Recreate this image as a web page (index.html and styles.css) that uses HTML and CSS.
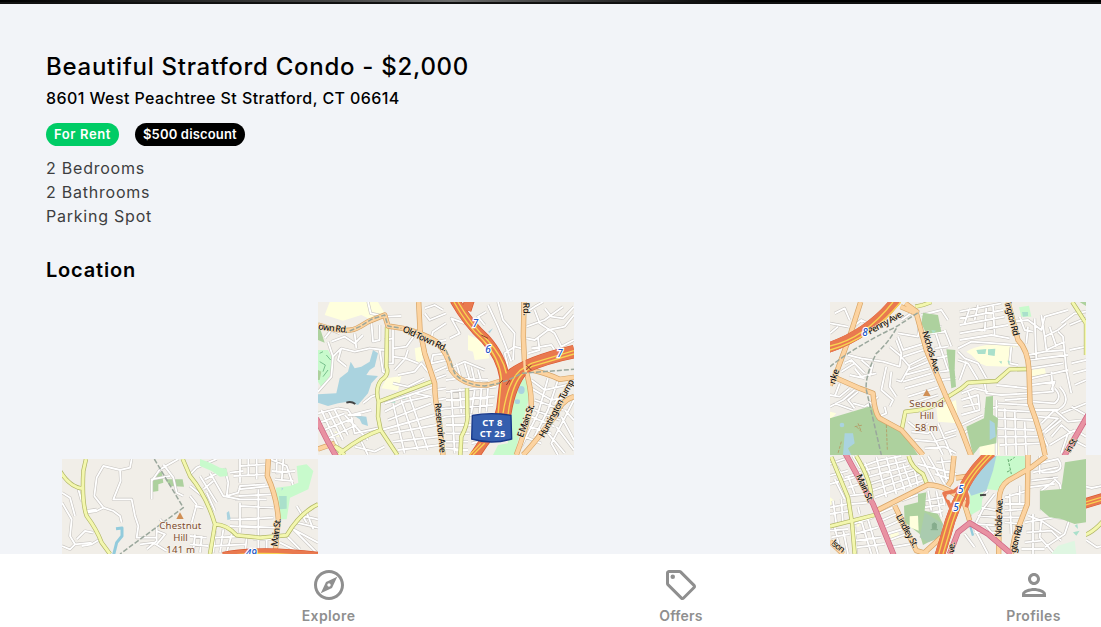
FILE: index.html
```
<!DOCTYPE html>
<html lang="en">
<head>
<meta charset="utf-8">
<title>Beautiful Stratford Condo</title>
<link rel="stylesheet" href="styles.css">
</head>
<body>
<div class="app">
<div class="slide"></div>
<main class="details">
  <h1 class="name">Beautiful Stratford Condo - $2,000</h1>
  <p class="address">8601 West Peachtree St Stratford, CT 06614</p>
  <div class="tags"><span class="tag rent">For Rent</span><span class="tag discount">$500 discount</span></div>
  <ul class="features"><li>2 Bedrooms</li><li>2 Bathrooms</li><li>Parking Spot</li></ul>
  <h2 class="location">Location</h2>
</main>
<section class="map">

<svg class="tile tile-a" viewBox="0 6 768 459">
<defs>
<g id="a-st">
<path d="M150 6L158 40L205 50L250 48M225 85L225 190L205 190M225 115L200 120M225 145L265 140L290 105L300 95M225 170L262 175L270 150M320 25L350 15L375 30M320 40L335 60L384 40M384 70L345 95L335 130L384 120M230 210L262 175L300 190M240 225L290 215L310 190L330 215M320 235L270 260L225 250M384 160L345 165L340 190L384 180M384 200L350 215M30 125L45 170L70 145L110 155L155 145L200 150M45 170L40 230L0 275M70 145L60 180L85 200M20 115L40 90L65 100M40 125L80 110L110 130L135 105M110 100L115 145M160 65L165 125L185 120L185 75M185 150L195 215L205 220M135 310L160 290L175 285M0 340L60 325L90 330L100 345L160 330M10 330L60 440M30 330L75 420M50 330L90 405M0 370L80 340M5 395L105 355M20 420L115 375M90 345L130 345M100 350L110 400L180 385M80 345L150 420M110 440L170 455L200 440M130 425L150 465"/>
<path d="M200 310L350 260M200 335L260 305L330 290M210 360L340 310M190 390L350 345M215 400L355 375M225 425L360 410M240 450L365 435M225 310L260 460M250 300L300 450M275 290L330 450M265 290L290 280L340 290M355 235L384 225M350 270L384 265M355 300L384 295M355 330L384 325M365 355L384 350"/>
<path d="M510 15L540 80L560 130L580 185M540 6L555 60L590 100L585 180M500 75L480 50L505 35M440 70L400 55L425 100L395 115M384 210L440 185L500 210M400 200L415 235M415 190L430 240M440 190L455 240M460 200L470 245M480 210L490 245M384 240L420 235L510 240M570 200L560 160L590 140L610 145M625 80L680 60L735 20M625 115L650 120L690 90L740 80L768 45M650 30L665 70L710 100L730 140L768 120M680 25L700 50L735 55L768 20M640 145L700 135L720 165M620 40L650 20L675 6M630 160L665 150L660 115"/>
<path d="M384 275L535 260M384 300L530 290M384 325L525 315M384 350L465 345M384 375L460 375M384 400L455 400M384 425L450 425M384 445L450 450M400 270L410 460M425 265L430 340M470 270L460 340M490 265L485 340M510 265L505 335M460 430L510 420M640 240L680 270L768 250M640 265L700 300L750 290M650 300L735 330M650 330L725 360M640 350L710 380M635 380L700 400M620 410L670 430M690 235L660 340L610 440M720 240L690 330L650 410M745 270L710 310M768 300L700 430L720 465M730 350L768 420M715 380L768 450M690 400L740 460M740 330L768 360"/>
</g>
<g id="a-yel"><path d="M207 80L205 200Q215 225 190 240Q170 265 182 305L180 350L188 390L238 465M182 305L340 245M188 390Q130 410 75 453L45 435L80 465M75 453L60 465M447 265L448 340Q452 370 430 410L427 465"/></g>
<g id="a-or"><path d="M0 75Q90 105 125 80L150 65L200 45L210 78L255 85Q315 98 355 125Q390 160 400 210Q435 260 510 255Q570 240 620 205Q690 220 725 238L768 232M302 6L306 90L320 160L350 250Q350 300 363 355L375 465M0 447L50 430M618 6L616 110L620 200Q640 260 640 315Q620 400 595 465M768 290Q730 300 710 350Q640 440 615 465"/></g>
</defs>
<rect class="land" x="0" y="0" width="768" height="470"/>
<path class="school" d="M35 6L180 6L205 48L150 55L130 45L75 62L20 45ZM205 235L250 228L240 272L190 265ZM290 145L310 140L315 180L295 190ZM450 105L500 125L515 175L470 180L465 155L450 150ZM50 395L75 392L70 410L55 410Z"/>
<path class="park" d="M0 150L30 150L45 180L35 230L10 262L0 245ZM610 235L630 240L632 300L610 380L590 465L525 465L540 435L570 430L565 350L580 300Z"/>
<path class="wood" d="M0 65L20 128L0 120ZM0 210L10 215L5 240L0 240Z"/>
<path class="scrub" d="M5 160L15 155M25 165L38 180M5 185L22 195L15 215M15 230L30 210"/>
<path class="pitch" d="M215 300L230 295L232 308L220 308ZM245 290L265 285L262 297L248 297Z"/>
<path class="water" d="M98 185L110 205L130 200L155 185L165 150L180 160L170 200L155 210L145 225L180 228L160 250L150 280L120 315L90 305L60 310L30 318L0 308L0 283L55 280L65 235L90 215ZM105 345L145 350L150 378L132 372L125 358ZM510 95L525 85L515 100ZM600 270a10 12 0 1 0 20 0a10 12 0 1 0 -20 0M590 305a8 7 0 1 0 16 0a8 7 0 1 0 -16 0"/>
<use href="#a-st" class="st-case"/><use href="#a-st" class="st"/>
<path class="dam" d="M85 308Q100 303 112 312"/>
<use href="#a-yel" class="yel-case"/><use href="#a-yel" class="yel"/>
<use href="#a-or" class="or-case"/><use href="#a-or" class="or"/>
<path class="pink-case" d="M-5 355Q20 410 55 470"/><path class="pink" d="M-5 355Q20 410 55 470"/>
<path class="mw-case" d="M410 0Q450 70 500 115Q550 170 560 235Q560 300 545 345M455 0L445 30M545 370L560 240Q600 190 768 150M768 160Q690 175 620 205Q580 250 565 340L495 430L465 475"/>
<path class="mw" d="M410 0Q450 70 500 115Q550 170 560 235Q560 300 545 345M455 0L445 30M545 370L560 240Q600 190 768 150M768 160Q690 175 620 205Q580 250 565 340L495 430L465 475"/>
<path class="lane" d="M408 6Q445 75 495 120Q545 175 550 235L540 345M420 6Q460 75 508 120Q555 170 565 220M768 152L640 190L605 212Q570 245 555 340M768 162L640 200L610 225Q580 260 570 345M500 430L465 465M488 430L455 465"/>
<path class="or thin" d="M618 150L620 205Q640 255 640 290"/>
<path class="rail" d="M95 93L125 80L160 58L200 45L210 78L250 85M384 150L410 220Q440 255 500 258Q560 250 610 220L768 208"/>
<path class="bridge" d="M545 250L555 240M565 255L575 240M625 210L640 195M625 195L640 210M490 105L510 115"/>
<g class="road-name">
<text transform="translate(0 88) rotate(7)" textLength="88">own Rd.</text>
<text transform="translate(252 94) rotate(25)" textLength="143">Old Town Rd.</text>
<text transform="translate(350 310) rotate(84)" textLength="150">Reservoir Ave</text>
<text transform="translate(615 8) rotate(88)" textLength="40">Rd.</text>
<text transform="translate(614 414) rotate(-70)" textLength="104">E Main St.</text>
<text transform="translate(678 415) rotate(-62)" textLength="194">Huntington Turnp</text>
</g>
<g class="exit"><text x="464" y="80">7</text><text x="502" y="158">6</text><text x="718" y="172">7</text></g>
<path class="shield" d="M463 346Q520 336 579 346L581 417Q520 435 461 417Z"/>
<g class="shield-text"><text x="493" y="377" textLength="60">CT 8</text><text x="485" y="412" textLength="77">CT 25</text></g>
</svg>

<svg class="tile tile-b" viewBox="6 6 768 459">
<defs>
<g id="b-st">
<path d="M20 40L50 25L65 60M6 70L60 80M65 90L100 60L130 75M6 100L30 80M60 165L100 175L165 185M50 190L70 180L110 220M40 215L80 190M100 180L130 205M80 205L100 230L145 220M65 225L110 235M185 140L215 165L245 200L220 245L205 240M205 120L220 160L215 200L165 185M175 200L160 270L195 300L185 320M190 215L185 260L205 290M135 190L125 230M210 100L270 110L275 75M210 110L225 150L290 130M225 170L300 145M245 195L305 165M240 210L300 185M230 225L305 205M225 245L310 220M230 265L320 240M240 290L330 262M250 310L330 285M285 70L340 80M300 100L355 95M320 145L360 140M325 175L370 165M335 215L380 210M340 240L384 235M310 60L360 210M350 90L370 140M280 45L340 30L360 60M220 60L250 40M140 300L110 320L75 310M120 320L150 290M90 275L60 300L80 325M80 270L45 300L6 320M65 265L35 290L6 285M35 250L20 290M75 330L20 310M150 350L175 340L170 320M240 365L270 390L300 370M250 395L300 400L320 380M260 420L320 425L384 405M290 445L350 440L384 460M300 380L345 465M330 370L370 465M350 400L384 390"/>
<path d="M395 35L520 10M395 55L525 30M395 75L530 50M395 100L540 75M395 120L490 105L545 115M410 70L425 25M440 60L450 15M470 95L475 20M500 105L495 15M390 145L430 125L570 135M390 155L410 175L450 190L475 235M390 180L420 190L450 240M415 185L395 240M550 65L600 60L640 90L650 50L720 30M600 80L595 130M620 55L625 180M640 45L650 110L690 90L715 70M575 50L590 90L615 95M650 110L655 150L710 125M665 80L685 140M690 95L705 110L715 210L730 280M600 165L650 155L710 150M600 180L720 165M605 205L705 190M610 235L720 210M610 255L680 245L670 270M550 140L545 190L570 195M610 280L675 275L670 215M725 150L774 140M730 190L774 180M735 220L774 210M740 255L774 240M725 75L774 55M700 70L740 40L774 35"/>
<path d="M470 250L475 280L520 285M505 255L600 265M520 285L600 280M530 300L600 295M470 330L510 320M400 280L440 265L480 275M400 300L450 285L455 330L400 345M405 320L455 310M420 275L440 330M510 310L600 315M510 330L605 335M510 355L615 360M500 385L620 390M510 410L630 410M515 435L635 430M505 300L505 465M530 325L535 465M560 330L565 465M590 365L595 465M615 305L680 310Q705 290 680 265M620 330L690 330Q735 305 695 260M630 350L690 355L640 400L660 440M640 370L680 330L720 365L774 360M650 400L700 360M670 410L700 375L730 400M665 435L740 390M700 340L774 310M730 320L774 345M720 400L700 460M740 390L774 410M735 420L774 440M400 375L465 345M405 400L440 380L440 440"/>
</g>
<g id="b-yel"><path d="M262 20L285 15L310 6M220 395L232 335Q310 330 345 300L400 265L420 248L505 243L545 208L600 207M733 6L774 70L774 165"/></g>
<g id="b-or"><path d="M98 6L65 110L20 232L95 265L135 280Q140 340 155 355L220 390L285 465M20 232L6 255M218 20L265 40L295 150L350 280L400 390L430 470M232 10L270 38M540 6L570 120Q600 150 603 210L606 310Q640 400 652 470"/></g>
</defs>
<rect class="land" x="0" y="0" width="780" height="470"/>
<path class="school" d="M6 335L25 340L6 360ZM325 325L384 300L390 370L330 365ZM415 155Q450 130 570 128L570 140L545 145L545 200L475 198L455 190L430 165ZM610 210L650 205L655 225L612 230ZM455 430L510 415L515 465L455 465Z"/>
<path class="park" d="M573 22L603 17L610 50L580 50Z"/>
<use href="#b-st" class="st-case"/><use href="#b-st" class="st"/>
<path class="wood" d="M285 38L330 45L340 95L295 102L280 70ZM355 148L382 150L380 210L384 260L370 265L365 220ZM6 355L130 318L150 360L225 395L270 465L6 465ZM474 290L495 288L495 345L510 355L505 430L455 440L435 465L415 380L468 355ZM755 6L774 6L774 18Z"/>
<path class="pitch" d="M445 150L475 147L472 162L450 162ZM480 148L502 146L500 168L480 165ZM582 36L600 36L600 48L585 50ZM513 184L522 184L520 192ZM538 182L545 182L545 196ZM310 90L325 92L315 100Z"/>
<path class="water" d="M485 360L500 370L503 410L485 420ZM50 400L75 400L80 430L60 445L70 465L45 465ZM35 375a7 7 0 1 0 14 0a7 7 0 1 0 -14 0"/>
<path class="trail" d="M90 370L100 395L85 380M80 380L105 375M175 375L178 450M40 425L30 460"/>
<use href="#b-yel" class="yel-case"/><use href="#b-yel" class="yel"/>
<use href="#b-or" class="or-case"/><use href="#b-or" class="or"/>
<path class="pink-case" d="M780 345L705 475"/><path class="pink" d="M780 345L705 475"/>
<path class="mw-case" d="M-5 145Q120 105 205 0"/><path class="mw wide" d="M-5 145Q120 105 205 0"/>
<path class="lane" d="M6 138Q110 115 195 6M6 150Q130 115 218 6"/>
<path class="rail" d="M6 200Q80 140 205 80L275 35M205 85Q180 130 145 160Q110 230 115 270L160 465"/>
<g class="road-name">
<text transform="translate(125 104) rotate(-29)" textLength="118">Penny Ave.</text>
<text transform="translate(282 96) rotate(73)" textLength="132">Nichols Ave.</text>
<text transform="translate(20 254) rotate(-72)" textLength="46">nke</text>
<text transform="translate(530 10) rotate(75)" textLength="103">ington Rd</text>
<text transform="translate(726 460) rotate(-60)" textLength="48">in St.</text>
</g>
<g class="exit"><text x="103" y="107">8</text></g>
<path class="peak" d="M285 288L296 268L308 288Z"/>
<g class="hill"><text x="244" y="321" textLength="103">Second</text><text x="275" y="356" textLength="43">Hill</text><text x="261" y="392" textLength="69">58 m</text></g>
</svg>

<svg class="tile tile-c" viewBox="6 9 768 285">
<defs>
<g id="c-st">
<path d="M215 9L210 35L180 42L130 30L110 65L103 120L130 155L110 165L80 170M180 42L182 75L160 130L215 130L225 180L235 210L230 245L290 245M130 155L160 165L180 180L185 200M80 165L110 160M6 110L30 125L45 180M6 140L35 190L30 240L45 265L95 260M50 250L75 225L100 230M55 100L65 135M65 270L95 265L120 250M6 270L30 280L45 265M275 130L275 70L330 60M275 75L300 40L355 9M310 25L340 65L350 110L370 120M290 225L315 235L290 265M290 215L290 255L260 280M300 190L320 210M240 265L280 260L320 285"/>
<path d="M390 55L410 35L470 9M420 60L470 140M435 70L495 40L505 80L500 120M430 100L460 75M440 110L465 165M450 50L490 120L540 130M510 50L550 45M540 9L540 80M565 9L565 60M590 9L590 70M540 30L615 25M520 60L615 55M535 100L630 90M535 120L635 115M500 120L535 110L540 90L615 85M525 130L620 130M540 150L640 155M540 140L540 230M595 100L595 280M630 9L680 30L700 90M650 9L650 50L705 45M670 9L665 75M645 70L700 75M635 45L690 50M540 190L640 185M540 210L645 215M510 190L590 190M510 210L590 215M465 225L460 290M490 220L480 290M515 235L500 290M465 245L560 240M460 270L555 265M560 245L555 290M390 90L440 130M390 120L410 145L395 200M405 150L430 155M390 240L440 245M390 265L445 270M405 235L400 285M425 240L420 290M580 250L640 250M620 245L620 290M680 240L720 280M700 220L774 260M710 200L774 215M740 170L760 220M710 150L740 200M730 180L774 190M690 210L770 290M660 260L720 290"/>
</g>
<g id="c-yel"><path d="M0 45Q30 95 70 98M78 9L70 45Q65 140 80 180Q110 220 125 260L150 294M368 9L390 60Q440 120 465 205L450 294M465 205Q500 205 530 238L600 245L680 238Q720 170 774 145"/></g>
<g id="c-or"><path d="M625 9L622 60Q650 120 655 190L645 294"/></g>
</defs>
<rect class="land" x="0" y="0" width="780" height="300"/>
<path class="wood" d="M280 65L305 45L310 80L295 85L295 105L275 108ZM315 70L368 70L372 92L330 90Z"/>
<use href="#c-st" class="st-case"/><use href="#c-st" class="st"/>
<path class="park" d="M420 9L450 20L480 35L500 38L503 60L480 62L455 45L420 30ZM710 30L740 25L760 45L745 100L690 125L680 190L655 190L648 95L690 90L715 80Z"/>
<path class="pitch" d="M657 120L680 120L680 158L660 160Z"/>
<path class="water" d="M500 170L507 165L512 190L502 192ZM665 95L670 97L665 104Z"/>
<path class="stream" d="M168 218L186 216L186 240L170 260L160 300"/>
<use href="#c-yel" class="yel-case"/><use href="#c-yel" class="yel"/>
<use href="#c-or" class="or-case"/><use href="#c-or" class="or"/>
<path class="rail" d="M283 9L370 155L180 294"/>
<path class="mw-case" d="M490 303Q600 281 774 303"/><path class="mw" d="M490 303Q600 281 774 303"/>
<path class="lane" d="M520 297Q600 287 710 297"/>
<g class="road-name"><text transform="translate(652 272) rotate(-83)" textLength="84">Main St.</text></g>
<g class="exit"><text x="557" y="302">49</text></g>
<path class="peak" d="M349 189L360 169L371 189Z"/>
<g class="hill"><text x="298" y="220" textLength="126">Chestnut</text><text x="340" y="254" textLength="43">Hill</text><text x="319" y="291" textLength="86">141 m</text></g>
</svg>

<svg class="tile tile-d" viewBox="6 3 768 297">
<defs>
<g id="d-st">
<path d="M6 30L50 15M6 65L60 50M20 75L50 135M6 90L80 70M50 70L100 55M25 35L45 70M60 65L80 120M60 100L95 90M65 125L110 120M70 150L130 145M90 160L95 180M75 6L95 40L150 20L220 6M105 50L235 20M115 70L245 35M125 90L265 45M130 110L280 60M140 130L285 80M110 25L125 60M145 9L175 130M175 9L205 120M200 6L230 110M225 30L250 100M260 50L270 95M280 9L320 85M270 30L384 60M300 6L350 90M325 25L384 20M320 60L370 75M340 9L355 80M6 160L60 150M6 180L65 170M15 140L25 210M40 135L45 210M6 230L60 225M10 250L65 240M20 220L35 280M45 225L60 300M80 220L85 300M75 210L135 190M80 240L150 220M80 260L160 250M85 280L170 270M100 200L130 300M120 195L150 300M150 180L195 160M160 200L205 180M170 220L215 200M175 240L225 225M180 260L235 240M190 280L250 270M220 140L275 120M280 120L290 160L350 150M300 110L310 170M325 110L340 190M290 140L345 130M290 180L345 170M345 120L350 155"/>
<path d="M625 30L690 15Q720 60 640 55M615 55L690 40M610 80L690 70M600 100L680 90M530 130L600 110M530 150L600 150M530 170L595 165M525 190L590 190M530 205L580 210M545 120L550 240M575 95L575 150M480 110L440 150L420 200M500 120L465 165L440 215M460 160L510 170M450 185L510 190M440 210L515 215M440 235L515 235M410 240L440 280M440 225L480 300M470 210L510 260M600 185L640 200L635 250L680 300M590 205L680 190L725 195L710 240L650 280M595 235L670 230L700 260M590 265L640 260M580 285L650 285M615 180L615 300M640 200L700 240M675 70L695 90L700 110M680 80L640 110L640 170M600 9L605 90M635 6L635 60"/>
</g>
<g id="d-yel"><path d="M10 9L60 130L72 205L80 300M85 6Q130 80 130 135M242 6Q250 40 285 60L297 90M6 217L140 183"/></g>
<g id="d-or"><path d="M150 168L300 92Q360 95 408 145L425 200M200 155L265 290L300 300M378 6L370 80L360 95M384 72L430 65M600 3L598 150L560 250L550 300M655 6L610 40L540 80Q510 100 514 150L512 300M285 300L340 250M6 262L45 300"/></g>
</defs>
<rect class="land" x="0" y="0" width="780" height="305"/>
<path class="school" d="M185 235L210 230L215 255L190 260ZM6 130L20 140L6 155ZM80 205L100 205L90 220Z"/>
<use href="#d-st" class="st-case"/><use href="#d-st" class="st"/>
<path class="wood" d="M228 155L270 145L270 120L295 115L290 170L330 180L345 210L320 255L285 273L275 240L230 205ZM711 25L774 15L774 205L740 210L700 195L665 190L636 165L636 110L700 105Z"/>
<path class="cem" d="M290 175L345 210L340 250L300 265L275 250Z"/>
<path class="school" d="M245 187L270 185L272 230L245 220Z"/>
<path class="park" d="M500 6L590 6L595 45L540 80L515 110L475 105L490 50ZM425 120L465 115L460 165L425 185Z"/>
<path class="grass" d="M690 275L740 260L745 300L670 300Z"/>
<path class="water" d="M465 6L505 6L495 50L475 110L430 125L418 105Z"/>
<path class="pitch" d="M740 215L748 210L750 225ZM735 235L755 230L745 245Z"/>
<path class="stream thin" d="M425 210L435 245"/>
<path class="dam" d="M456 124L474 122"/>
<use href="#d-yel" class="yel-case"/><use href="#d-yel" class="yel"/>
<use href="#d-or" class="or-case"/><use href="#d-or" class="or"/>
<path class="mw-case" d="M490 -5Q420 60 400 120Q370 180 355 240L335 305"/><path class="mw wide" d="M490 -5Q420 60 400 120Q370 180 355 240L335 305"/><path class="mw ramp" d="M370 165L348 118L378 112L400 95M405 100Q428 130 415 160"/>
<path class="lane" d="M485 -5Q415 65 393 120Q365 180 350 235L332 300M498 -5Q425 65 407 120Q375 190 363 240L345 300"/>
<path class="pink-case" d="M50 -5L135 150L200 310M365 300L390 235L425 207L480 240L550 300"/><path class="pink" d="M50 -5L135 150L200 310M365 300L390 235L425 207L480 240L550 300"/>
<circle class="roundabout" cx="363" cy="130" r="8"/>
<path class="trail green" d="M540 15L550 60M545 20L560 10M545 50L535 55"/>
<path class="cem-sign" d="M308 227H330M313 224V210Q319 203 325 210V224Z"/>
<g class="road-name">
<text transform="translate(83 66) rotate(65)" textLength="90">Main St.</text>
<text transform="translate(203 187) rotate(61)" textLength="110">Lindley St.</text>
<text transform="translate(520 249) rotate(-88)" textLength="116">Noble Ave.</text>
<text transform="translate(563 298) rotate(-76)" textLength="88">gton Rd.</text>
<text transform="translate(8 271) rotate(38)" textLength="44">lson</text>
<text transform="translate(378 298) rotate(-85)" textLength="34">ve.</text>
</g>
<g class="exit"><text x="390" y="116">5</text><text x="376" y="170">5</text></g>
</svg>

<svg class="tile tile-e" viewBox="378 3 45 297">
<rect class="land" x="370" y="0" width="60" height="305"/>
<path class="st-case" d="M378 98L395 102L430 95M378 258L410 280L430 275"/><path class="st" d="M378 98L395 102L430 95M378 258L410 280L430 275"/>
<path class="yel-case" d="M370 245Q400 235 430 200"/><path class="yel" d="M370 245Q400 235 430 200"/>
<path class="mw-case" d="M370 150L430 132"/><path class="mw" d="M370 150L430 132"/><path class="lane" d="M370 146L430 128M370 155L430 137"/>
</svg>
</section>

<nav class="nav">
  <a class="item"><svg class="icon" viewBox="0 0 24 24"><path fill-rule="evenodd" d="M12 2C6.48 2 2 6.48 2 12s4.48 10 10 10 10-4.48 10-10S17.52 2 12 2zm0 18c-4.41 0-8-3.59-8-8s3.59-8 8-8 8 3.59 8 8-3.59 8-8 8zM6.5 17.5l7.51-3.49L17.5 6.5 9.99 9.99 6.5 17.5zm5.5-6.6c.61 0 1.1.49 1.1 1.1s-.49 1.1-1.1 1.1-1.1-.49-1.1-1.1.49-1.1 1.1-1.1z"/></svg><span class="label explore">Explore</span></a>
  <a class="item"><svg class="icon" viewBox="0 0 24 24"><path fill-rule="evenodd" d="M21.41 11.58l-9-9C12.05 2.22 11.55 2 11 2H4c-1.1 0-2 .9-2 2v7c0 .55.22 1.05.59 1.42l9 9c.36.36.86.58 1.41.58.55 0 1.05-.22 1.41-.59l7-7c.37-.36.59-.86.59-1.41 0-.55-.23-1.06-.59-1.42zM13 20.01L4 11V4h7v-.01l9 9-7 7.02z"/><circle cx="6.5" cy="6.5" r="1.5"/></svg><span class="label offers">Offers</span></a>
  <a class="item"><svg class="icon" viewBox="0 0 24 24"><path fill-rule="evenodd" d="M12 6c1.1 0 2 .9 2 2s-.9 2-2 2-2-.9-2-2 .9-2 2-2m0 10c2.7 0 5.8 1.29 6 2H6c.23-.72 3.31-2 6-2m0-12C9.79 4 8 5.79 8 8s1.79 4 4 4 4-1.79 4-4-1.79-4-4-4zm0 10c-2.67 0-8 1.34-8 4v2h16v-2c0-2.66-5.33-4-8-4z"/></svg><span class="label profiles">Profiles</span></a>
</nav>
</div>
</body>
</html>
```
FILE: styles.css
```
* { box-sizing: border-box; margin: 0; padding: 0; }
body { background: #f2f4f8; font-family: Inter, "Open Sans", sans-serif; color: #000; overflow: hidden; }
.app { position: relative; height: 627px; overflow: hidden; }
.slide { height: 4px; background: linear-gradient(90deg, #000 0%, #2a2a2a 18%, #444 30%, #6d6d6d 41%, #555 46%, #333 54%, #000 68%, #000 100%); border-bottom: 2px solid #111; }
.details { padding: 48px 46px 0; height: 298px; white-space: nowrap; }
.name { font-size: 24px; font-weight: 500; line-height: 30px; letter-spacing: 0.72px; }
.address { font-size: 16px; font-weight: 500; line-height: 20px; margin-top: 6px; letter-spacing: 0.41px; }
.tags { display: flex; gap: 16px; margin-top: 15px; }
.tag { height: 23px; border-radius: 12px; padding-left: 8px; color: #fff; font-size: 13px; font-weight: 600; line-height: 23px; }
.rent { width: 73px; background: #00cc66; letter-spacing: 0.6px; }
.discount { width: 110px; background: #000; letter-spacing: 0.16px; }
.features { list-style: none; margin-top: 10px; color: #3d3e40; font-size: 16px; line-height: 24px; letter-spacing: 0.77px; }
.location { font-size: 20px; font-weight: 600; line-height: 26px; margin-top: 29px; letter-spacing: 0.8px; }

.map { position: relative; height: 252px; overflow: hidden; }
.tile { position: absolute; display: block; overflow: hidden; }
.tile-a { left: 318px; top: 0; width: 256px; height: 153px; }
.tile-b { left: 830px; top: 0; width: 256px; height: 153px; }
.tile-c { left: 62px; top: 157px; width: 256px; height: 95px; }
.tile-d { left: 830px; top: 153px; width: 256px; height: 99px; }
.tile-e { left: 1086px; top: 153px; width: 15px; height: 99px; }
.land { fill: #f1eee8; }
.school { fill: #ffffdd; }
.park { fill: #c8facc; }
.grass { fill: #dff6e2; }
.wood { fill: #add19e; }
.cem { fill: #aacbaf; }
.pitch { fill: #aae0cb; }
.water { fill: #aad3df; }
.st-case, .st, .yel-case, .yel, .or-case, .or, .pink-case, .pink, .mw-case, .mw, .lane, .rail, .trail, .stream, .dam, .bridge, .scrub, .cem-sign { fill: none; stroke-linejoin: round; }
.st-case { stroke: #c8c5c1; stroke-width: 9; }
.st { stroke: #fff; stroke-width: 5.5; }
.yel-case { stroke: #afb465; stroke-width: 13; }
.yel { stroke: #f3f7ae; stroke-width: 9; }
.or-case { stroke: #d5a365; stroke-width: 16; }
.or { stroke: #fcd3a0; stroke-width: 12; }
.pink-case { stroke: #cf6484; stroke-width: 17; }
.pink { stroke: #e892a2; stroke-width: 13; }
.mw-case { stroke: #d8572f; stroke-width: 31; }
.mw { stroke: #e9794f; stroke-width: 27; }
.wide { stroke-width: 30; }
.ramp { stroke-width: 11; }
.lane { stroke: #f8d552; stroke-width: 4; }
.rail { stroke: #9aa79c; stroke-width: 4.5; stroke-dasharray: 15 6; }
.trail { stroke: #b49862; stroke-width: 2.5; stroke-dasharray: 9 4; }
.green { stroke: #529b5b; }
.scrub { stroke: #78c08d; stroke-width: 3; }
.stream { stroke: #92cbdc; stroke-width: 9; }
.thin { stroke-width: 7; }
.dam { stroke: #444; stroke-width: 6; }
.bridge { stroke: #8a4030; stroke-width: 3; }
.roundabout { fill: #eee8df; }
.cem-sign { stroke: #86ad8d; stroke-width: 3; fill: #86ad8d; }
.road-name { font: 500 27px "Noto Sans", sans-serif; fill: #111; stroke: #f8e5c8; stroke-width: 3px; paint-order: stroke; }
.exit { font: italic 500 30px "Noto Sans", sans-serif; fill: #2356c5; stroke: #fff; stroke-width: 7px; paint-order: stroke; }
.shield { fill: #355eae; stroke: #16378a; stroke-width: 4; }
.shield-text { font: bold 28px "Noto Sans", sans-serif; fill: #fff; }
.peak { fill: #d08f55; }
.hill { font: 29px "Noto Sans", sans-serif; fill: #7d4c2e; stroke: #f6f2ec; stroke-width: 4px; paint-order: stroke; }

.nav { height: 73px; padding: 13px 0 0 152.25px; display: grid; grid-template-columns: repeat(3, 352.5px); background: #fff; }
.item { display: flex; flex-direction: column; align-items: center; }
.icon { width: 36px; height: 36px; fill: #8f8f8f; }
.label { margin-top: 4px; font-size: 14px; font-weight: 600; line-height: 18px; color: #8f8f8f; }
.explore { letter-spacing: 0.4px; }
.offers { letter-spacing: 0.2px; }
.profiles { letter-spacing: 0.35px; }
```
